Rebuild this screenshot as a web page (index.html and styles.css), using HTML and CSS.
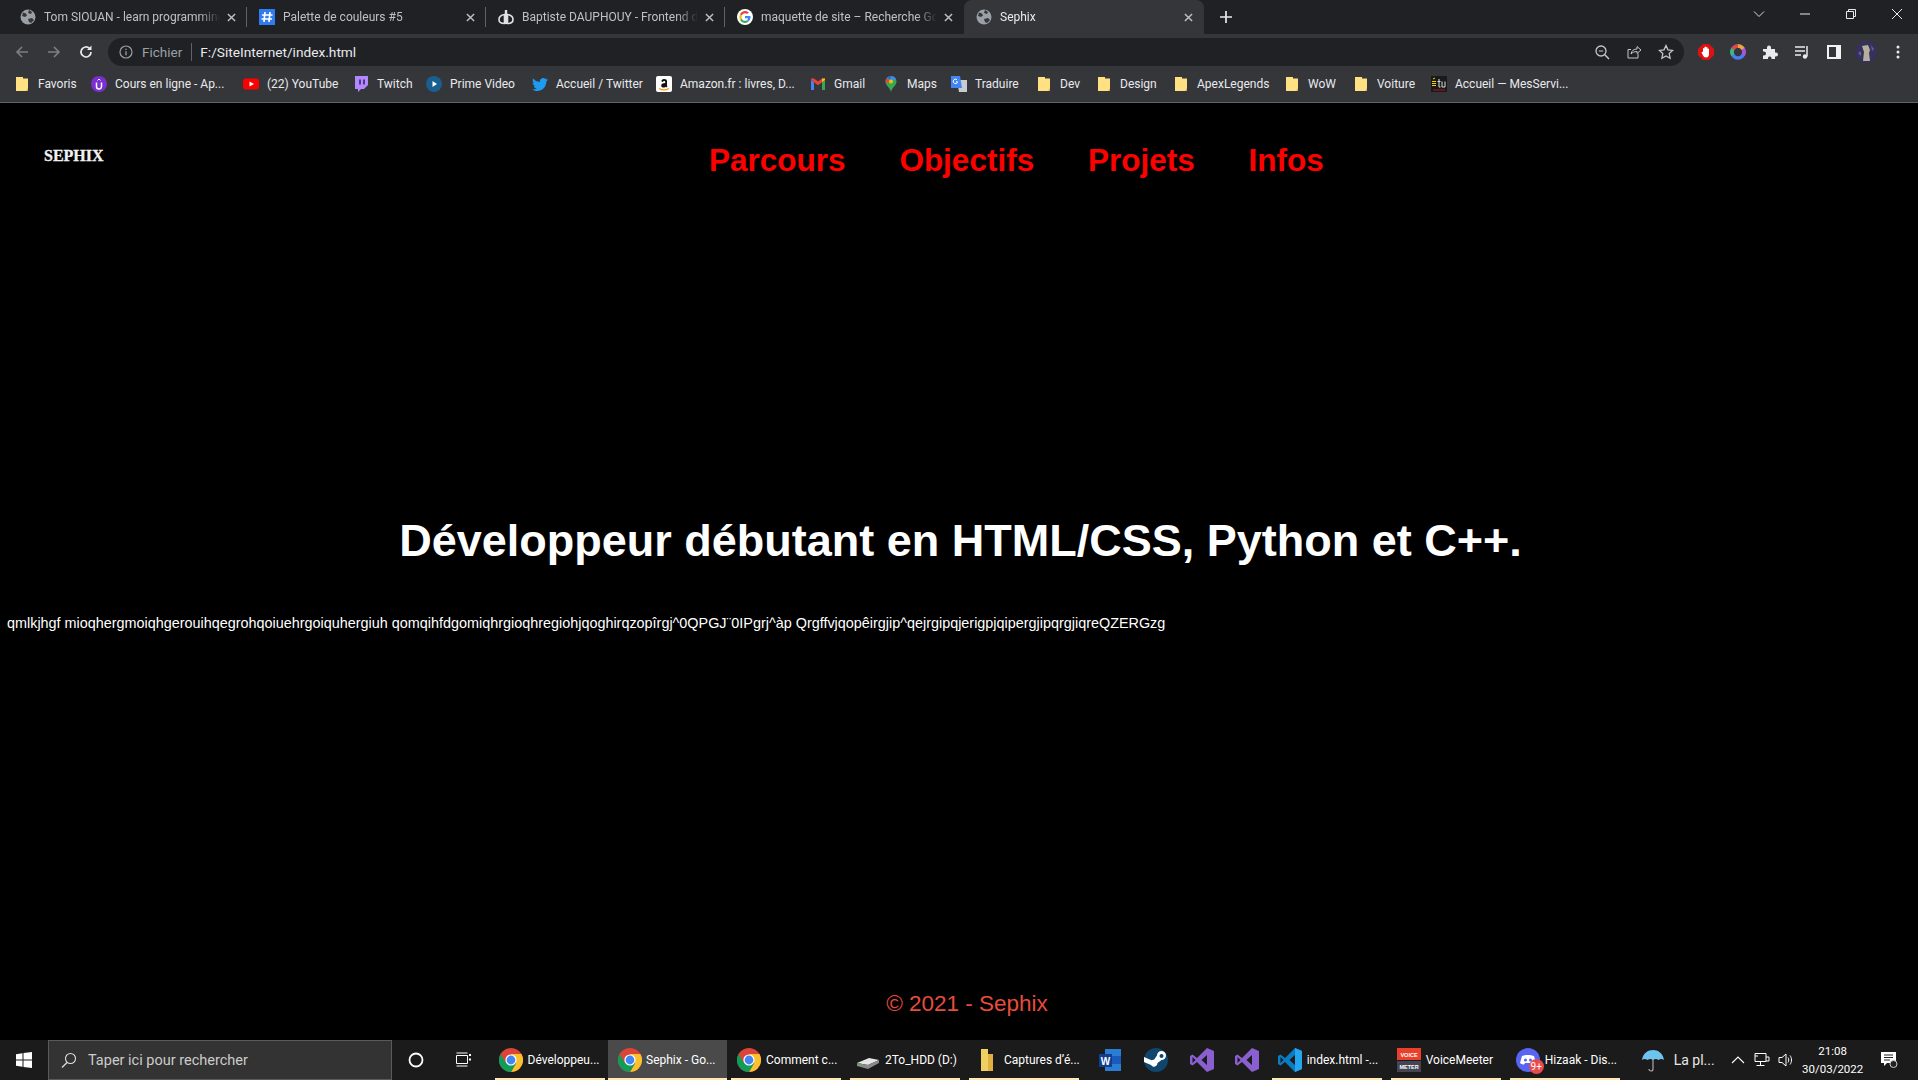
FILE: index.html
```html
<!DOCTYPE html>
<html lang="fr">
<head>
<meta charset="utf-8">
<title>Sephix</title>
<link rel="stylesheet" href="styles.css">
</head>
<body>
<svg class="defs" width="0" height="0" aria-hidden="true">
  <symbol id="globe" viewBox="0 0 16 16"><circle cx="8" cy="8" r="7.5" fill="#9aa0a6"/><path d="M3 3.500l3 1 1 2-2 1.500-3-1zM9 1l3 2-1 2-3-1zM8 10l4-1 2 2-3 3-2-1z" fill="#35363a"/></symbol>
  <symbol id="x" viewBox="0 0 10 10"><path d="M1 1l8 8M9 1l-8 8" stroke="#bdc1c6" stroke-width="1.600" fill="none"/></symbol>
  <symbol id="folder" viewBox="0 0 16 16"><path d="M2 1h7v1.500h5V15H2z" fill="#ffe082"/><path d="M12 15l2-3v3z" fill="#d9b44a"/></symbol>
  <symbol id="google" viewBox="0 0 16 16"><circle cx="8" cy="8" r="8" fill="#fff"/><path d="M13.500 8.200c0-.4 0-.8-.1-1.200H8v2.200h3.100c-.1.700-.5 1.300-1.100 1.700l1.700 1.400c1.100-1 1.800-2.400 1.800-4.100z" fill="#4285f4"/><path d="M8 14c1.500 0 2.800-.5 3.700-1.400L10 11.200c-.5.300-1.200.6-2 .6-1.500 0-2.800-1-3.300-2.400L3 10.800C3.900 12.700 5.800 14 8 14z" fill="#34a853"/><path d="M4.700 9.400C4.500 8.500 4.500 7.500 4.700 6.600L3 5.200c-.8 1.700-.8 3.900 0 5.600z" fill="#fbbc05"/><path d="M8 4.200c.9 0 1.600.3 2.200.9l1.600-1.600C10.800 2.600 9.500 2 8 2 5.800 2 3.900 3.300 3 5.200l1.700 1.400C5.200 5.200 6.500 4.200 8 4.200z" fill="#ea4335"/></symbol>
  <symbol id="chrome" viewBox="0 0 24 24"><circle cx="12" cy="12" r="12" fill="#db4437"/><path d="M12 24a12 12 0 0 0 10.400-18H12l5.200 9z" fill="#fbc02d"/><path d="M12 24l5.200-9L6.800 15 1.600 6A12 12 0 0 0 12 24z" fill="#0f9d58"/><circle cx="12" cy="12" r="5.600" fill="#fff"/><circle cx="12" cy="12" r="4.400" fill="#4285f4"/></symbol>
  <symbol id="vs" viewBox="0 0 24 24"><path d="M17 0l7 3v18l-7 3-10-10-4.500 3.500L0 16V8l2.500-1.500L7 10zM17 7l-5.500 5 5.500 5zM2.500 9v6l3-3z" fill="#8a5fcf"/></symbol>
</svg>

<div class="screen">
  <div class="tabstrip">
    <div class="tab">
      <svg class="fav"><use href="#globe"/></svg>
      <span class="tab-title">Tom SIOUAN - learn programming</span>
      <svg class="close"><use href="#x"/></svg>
    </div>
    <div class="tab">
      <svg class="fav" viewBox="0 0 16 16"><rect width="16" height="16" fill="#2f7bf0"/><path d="M6 3L5 13M11 3l-1 10M3 6h10.500M2.500 10h10.500" stroke="#fff" stroke-width="1.700"/></svg>
      <span class="tab-title">Palette de couleurs #5</span>
      <svg class="close"><use href="#x"/></svg>
    </div>
    <div class="tab">
      <svg class="fav" viewBox="0 0 16 16"><path d="M6.500 14.500V5.500C3 6 1 8 1 10.500s1.500 4 5.500 4zM9.500 14.500V5.500c3.500.5 5.500 2.500 5.500 5s-1.500 4-5.500 4z" fill="none" stroke="#dfe1e5" stroke-width="1.600"/><path d="M8 1v14" stroke="#dfe1e5" stroke-width="2.400"/></svg>
      <span class="tab-title">Baptiste DAUPHOUY - Frontend developer</span>
      <svg class="close"><use href="#x"/></svg>
    </div>
    <div class="tab tab-last">
      <svg class="fav"><use href="#google"/></svg>
      <span class="tab-title">maquette de site – Recherche Google</span>
      <svg class="close"><use href="#x"/></svg>
    </div>
    <div class="tab tab-active">
      <svg class="fav"><use href="#globe"/></svg>
      <span class="tab-title">Sephix</span>
      <svg class="close"><use href="#x"/></svg>
    </div>
    <svg class="newtab" viewBox="0 0 14 14"><path d="M7 1v12M1 7h12" stroke="#e8eaed" stroke-width="1.700"/></svg>
    <div class="winctl">
      <svg class="win-ico" viewBox="0 0 12 12"><path d="M1 3.500l5 5 5-5" stroke="#dadce0" fill="none"/></svg>
      <svg class="win-ico" viewBox="0 0 12 12"><path d="M1 6h10" stroke="#e8eaed" fill="none"/></svg>
      <svg class="win-ico" viewBox="0 0 12 12"><path d="M1.500 3.500h7v7h-7zM3.500 3.500v-2h7v7h-2" stroke="#e8eaed" fill="none"/></svg>
      <svg class="win-ico" viewBox="0 0 12 12"><path d="M1 1l10 10M11 1L1 11" stroke="#e8eaed" fill="none"/></svg>
    </div>
  </div>

  <div class="toolbar">
    <svg class="nav-ico" viewBox="0 0 16 16"><path d="M14 8H3M8 3L3 8l5 5" stroke="#7c7f84" stroke-width="1.600" fill="none"/></svg>
    <svg class="nav-ico" viewBox="0 0 16 16"><path d="M2 8h11M8 3l5 5-5 5" stroke="#7c7f84" stroke-width="1.600" fill="none"/></svg>
    <svg class="nav-ico" viewBox="0 0 16 16"><path d="M13 8a5 5 0 1 1-1.500-3.600" stroke="#e8eaed" stroke-width="1.700" fill="none"/><path d="M13.500 1.500v4.500H9z" fill="#e8eaed"/></svg>
    <div class="omnibox">
      <svg class="info" viewBox="0 0 14 14"><circle cx="7" cy="7" r="6" stroke="#9aa0a6" stroke-width="1.200" fill="none"/><path d="M7 6.200v4M7 3.800v1.300" stroke="#9aa0a6" stroke-width="1.300"/></svg>
      <span class="scheme">Fichier</span>
      <span class="omni-sep"></span>
      <span class="url">F:/SiteInternet/index.html</span>
      <svg class="omni-ico" viewBox="0 0 16 16"><circle cx="7" cy="7" r="5" stroke="#c4c7c5" stroke-width="1.300" fill="none"/><path d="M10.800 10.800L15 15" stroke="#c4c7c5" stroke-width="1.500"/><path d="M4.800 7h4.400" stroke="#c4c7c5"/></svg>
      <svg class="omni-ico" viewBox="0 0 16 16"><path d="M12 9.500V14H2V5.500h3" stroke="#c4c7c5" fill="none"/><path d="M5 10c.5-3.500 3-5 6-5V2.500L15 6l-4 3.500V7.500c-2.500 0-4.500.8-6 2.500z" stroke="#c4c7c5" fill="none"/></svg>
      <svg class="omni-ico" viewBox="0 0 16 16"><path d="M8 1.500l2 4.300 4.700.6-3.500 3.200.9 4.700L8 11.900l-4.100 2.400.9-4.700L1.300 6.400 6 5.800z" stroke="#c4c7c5" stroke-width="1.300" fill="none"/></svg>
    </div>
    <div class="exts">
      <svg class="ext" viewBox="0 0 16 16"><path d="M5 0h6l5 5v6l-5 5H5l-5-5V5z" fill="#e01010"/><path d="M5 8V4.500a.8.800 0 0 1 1.500 0V3a.8.800 0 0 1 1.500 0v.5a.8.800 0 0 1 1.500 0V5a.8.800 0 0 1 1.500 0v5c0 2-1 3.500-3 3.500-1.500 0-2.300-.7-3-2L3.500 8.500C4 7.500 4.800 7.800 5 8z" fill="#fff"/></svg>
      <svg class="ext" viewBox="0 0 16 16"><circle cx="8" cy="8" r="6" fill="none" stroke="#4c7cf0" stroke-width="3.600"/><path d="M8 2a6 6 0 0 1 5.200 3" fill="none" stroke="#f2a33a" stroke-width="3.600"/><path d="M2.800 5A6 6 0 0 1 8 2" fill="none" stroke="#e0483e" stroke-width="3.600"/><path d="M2.800 11A6 6 0 0 1 2.800 5" fill="none" stroke="#3cb878" stroke-width="3.600"/><path d="M13.200 5a6 6 0 0 1 0 6" fill="none" stroke="#b04fd8" stroke-width="3.600"/></svg>
      <svg class="ext" viewBox="0 0 16 16"><path d="M1 5h4V3.500a2 2 0 0 1 4 0V5h4v3.500h1a2 2 0 0 1 0 4h-1V15H9.500v-1a1.800 1.800 0 0 0-3.500 0v1H1v-3.500h1a2 2 0 0 0 0-4H1z" fill="#e8eaed"/></svg>
      <svg class="ext" viewBox="0 0 16 16"><path d="M1 3h10M1 7h10M1 11h6" stroke="#e8eaed" stroke-width="1.400"/><path d="M13 2v10.500" stroke="#e8eaed" stroke-width="1.500"/><circle cx="11" cy="12.500" r="2.200" fill="#e8eaed"/></svg>
      <svg class="ext" viewBox="0 0 16 16"><path d="M1 1h14v14H1zM3 3v10h7V3z" fill="#f1f3f4" fill-rule="evenodd"/></svg>
      <svg class="avatar" viewBox="0 0 22 22"><circle cx="11" cy="11" r="11" fill="#34325a"/><path d="M7 5l6-1 2 5-1 3 1 8H8l1-9z" fill="#b8ad9b"/><path d="M16 4l3 4-2 2zM3 12l3-2 0 5z" fill="#6d5a95"/></svg>
      <svg class="ext" viewBox="0 0 16 16"><circle cx="8" cy="3" r="1.500" fill="#e8eaed"/><circle cx="8" cy="8" r="1.500" fill="#e8eaed"/><circle cx="8" cy="13" r="1.500" fill="#e8eaed"/></svg>
    </div>
  </div>

  <div class="bookmarks">
    <div class="bm"><svg class="bm-ico"><use href="#folder"/></svg><span>Favoris</span></div>
    <div class="bm"><svg class="bm-ico" viewBox="0 0 16 16"><circle cx="8" cy="8" r="8" fill="#7c2fd0"/><path d="M5.500 6.500v4a2.500 2.500 0 0 0 5 0v-4" stroke="#fff" stroke-width="1.500" fill="none"/><path d="M6.500 4.500L8 3l1.500 1.500" stroke="#fff" fill="none"/></svg><span>Cours en ligne - Ap...</span></div>
    <div class="bm"><svg class="bm-ico" viewBox="0 0 16 16"><rect y="2.500" width="16" height="11" rx="3" fill="#f00"/><path d="M6.500 5.500v5L11 8z" fill="#fff"/></svg><span>(22) YouTube</span></div>
    <div class="bm"><svg class="bm-ico" viewBox="0 0 16 16"><path d="M2 0h13v9l-4 4H8l-3 3v-3H2z" fill="#b388ff"/><path d="M7 3.500v5M11 3.500v5" stroke="#2a2060" stroke-width="1.500"/></svg><span>Twitch</span></div>
    <div class="bm"><svg class="bm-ico" viewBox="0 0 16 16"><circle cx="8" cy="8" r="8" fill="#1a5f8f"/><path d="M6.500 5v6l4.500-3z" fill="#fff"/></svg><span>Prime Video</span></div>
    <div class="bm"><svg class="bm-ico" viewBox="0 0 16 16"><path d="M16 3.500c-.6.300-1.200.4-1.900.5.700-.4 1.200-1 1.400-1.800-.6.400-1.300.7-2.100.8a3.300 3.300 0 0 0-5.600 3C5 5.900 2.600 4.600 1.100 2.600c-.9 1.500-.4 3.400 1 4.400-.5 0-1-.2-1.500-.4 0 1.600 1.100 3 2.600 3.300-.5.100-1 .1-1.500 0 .4 1.300 1.600 2.300 3.100 2.300A6.600 6.600 0 0 1 0 13.500c1.500.9 3.200 1.500 5 1.500 6 0 9.500-5 9.400-9.800.6-.5 1.200-1 1.600-1.700z" fill="#1d9bf0"/></svg><span>Accueil / Twitter</span></div>
    <div class="bm"><svg class="bm-ico" viewBox="0 0 16 16"><rect width="16" height="16" rx="2" fill="#fff"/><path d="M8 3c2 0 3 .8 3 2.300V9c0 .6.200 1 .5 1.300L10.200 11.500c-.3-.2-.6-.6-.7-.8-.5.600-1.200.9-2 .9-1.400 0-2.300-.8-2.300-2.200 0-1.600 1.400-2.400 4-2.500v-.8c0-.6-.4-1-1-1-.7 0-1.100.3-1.300 1L5.300 5.300C5.600 3.800 6.700 3 8 3z" fill="#111"/><path d="M3 12.500c3 1.700 7 1.700 10 0" stroke="#f90" stroke-width="1.200" fill="none"/></svg><span>Amazon.fr : livres, D...</span></div>
    <div class="bm"><svg class="bm-ico" viewBox="0 0 16 16"><path d="M1 14V4l3 2.300V14z" fill="#4285f4"/><path d="M12 14V6.300L15 4v10z" fill="#34a853"/><path d="M1 4l7 5.300L15 4v-1.500L12 2.500 8 5.500 4 2.500 1 2.500z" fill="#ea4335"/><path d="M12 2.500h3V4l-3 2.300z" fill="#fbbc05"/></svg><span>Gmail</span></div>
    <div class="bm"><svg class="bm-ico" viewBox="0 0 16 16"><path d="M8 0a5.500 5.500 0 0 1 5.500 5.500C13.500 9.500 9 11.500 8 16 7 11.500 2.500 9.500 2.500 5.500A5.500 5.500 0 0 1 8 0z" fill="#34a853"/><path d="M4 2a5.500 5.500 0 0 1 4-2v4z" fill="#1a73e8"/><path d="M8 0a5.500 5.500 0 0 1 5 3.500L8 5z" fill="#4285f4"/><path d="M2.500 5.500c0-1.500.5-2.700 1.500-3.500l3 3-4 2.500z" fill="#ea4335"/><circle cx="8" cy="5.500" r="2" fill="#fbbc05"/></svg><span>Maps</span></div>
    <div class="bm"><svg class="bm-ico" viewBox="0 0 16 16"><path d="M6 4h10v12H8z" fill="#c8cbd0"/><path d="M0 0h9l2 12H0z" fill="#4285f4"/><path d="M6 3.800a2.200 2.200 0 1 0 .6 2H5" stroke="#fff" fill="none"/></svg><span>Traduire</span></div>
    <div class="bm"><svg class="bm-ico"><use href="#folder"/></svg><span>Dev</span></div>
    <div class="bm"><svg class="bm-ico"><use href="#folder"/></svg><span>Design</span></div>
    <div class="bm"><svg class="bm-ico"><use href="#folder"/></svg><span>ApexLegends</span></div>
    <div class="bm"><svg class="bm-ico"><use href="#folder"/></svg><span>WoW</span></div>
    <div class="bm"><svg class="bm-ico"><use href="#folder"/></svg><span>Voiture</span></div>
    <div class="bm"><svg class="bm-ico" viewBox="0 0 16 16"><rect width="16" height="16" fill="#1a1a1a"/><rect x="2" y="13.500" width="12" height="1" fill="#b01515"/><path d="M1 5.500h4M1 7.500h4M1 9.500h4M2 3l2-1" stroke="#f0d400"/><path d="M8 3v8h1.500M6.500 5.500h3M11 5.500v5.500h3V5.500" stroke="#ddd" fill="none"/></svg><span>Accueil — MesServi...</span></div>
  </div>

  <main class="page">
    <header class="site-header">
      <div class="logo">SEPHIX</div>
      <nav class="site-nav">
        <a class="site-link">Parcours</a>
        <a class="site-link">Objectifs</a>
        <a class="site-link">Projets</a>
        <a class="site-link">Infos</a>
      </nav>
    </header>
    <h1 class="headline">Développeur débutant en HTML/CSS, Python et C++.</h1>
    <p class="lorem">qmlkjhgf mioqhergmoiqhgerouihqegrohqoiuehrgoiquhergiuh qomqihfdgomiqhrgioqhregiohjqoghirqzopîrgj^0QPGJ¨0IPgrj^àp Qrgffvjqopêirgjip^qejrgipqjerigpjqipergjipqrgjiqreQZERGzg</p>
    <footer class="site-footer">© 2021 - Sephix</footer>
  </main>

  <div class="taskbar">
    <svg class="start" viewBox="0 0 16 16"><path d="M0 2.300l6.500-1v6.200H0zM7.500 1.100L16 0v7.500H7.500zM0 8.500h6.500v6.200l-6.500-1zM7.500 8.500H16V16l-8.500-1.100z" fill="#fff"/></svg>
    <div class="searchbox">
      <svg class="search-ico" viewBox="0 0 16 16"><circle cx="9.500" cy="6.500" r="5" stroke="#e0e0e0" stroke-width="1.100" fill="none"/><path d="M6 10.500L1 15.500" stroke="#e0e0e0" stroke-width="1.200"/></svg>
      <span>Taper ici pour rechercher</span>
    </div>
    <svg class="cortana" viewBox="0 0 16 16"><circle cx="8" cy="8" r="6.500" stroke="#fff" stroke-width="1.800" fill="none"/></svg>
    <svg class="taskview" viewBox="0 0 16 16"><path d="M.5 3.500h11v8H.5zM.5 1h11M.5 14h11" stroke="#fff" fill="none"/><path d="M14 2v2M14 6.500v2" stroke="#fff" stroke-width="2"/></svg>
    <div class="task open t-dev"><svg class="task-ico"><use href="#chrome"/></svg><span>Développeu...</span></div>
    <div class="task open active"><svg class="task-ico"><use href="#chrome"/></svg><span>Sephix - Go...</span></div>
    <div class="task open"><svg class="task-ico"><use href="#chrome"/></svg><span>Comment c...</span></div>
    <div class="task open"><svg class="task-ico" viewBox="0 0 24 24"><path d="M1 15l12-5 10 2-11 5z" fill="#e6e6e6"/><path d="M1 15l11 2 11-5v3L12 21 1 18z" fill="#8a8a8a"/><circle cx="5" cy="17" r="1" fill="#3c3"/></svg><span>2To_HDD (D:)</span></div>
    <div class="task open"><svg class="task-ico" viewBox="0 0 24 24"><path d="M6 1h7v22H6z" fill="#f0d060"/><path d="M13 6h5v17h-5z" fill="#e0b040"/></svg><span>Captures d’é...</span></div>
    <svg class="pin p-word" viewBox="0 0 24 24"><path d="M7 1h16v22H7z" fill="#2b7cd3"/><path d="M7 8h16v8H7z" fill="#185abd"/><rect x="1" y="6" width="13" height="13" fill="#103f91"/><text x="7.500" y="16.500" class="word-w">W</text></svg>
    <svg class="pin p-steam" viewBox="0 0 24 24"><circle cx="12" cy="12" r="12" fill="#10466e"/><path d="M0 14l7 3a3.500 3.500 0 0 0 6.500-2l4-3a4.500 4.500 0 1 0-4.500-4.500l-3 4.200a3.500 3.500 0 0 0-2.500.6L0 9z" fill="#fff"/><circle cx="17.500" cy="8" r="2" fill="#10466e"/></svg>
    <svg class="pin"><use href="#vs"/></svg>
    <svg class="pin"><use href="#vs"/></svg>
    <div class="task open t-code"><svg class="task-ico" viewBox="0 0 24 24"><path d="M17 0l7 3v18l-7 3L7 14l-4.500 3.500L0 16V8l2.500-1.500L7 10z" fill="#0a7cc4"/><path d="M17 0l7 3v18l-7 3z" fill="#23a6ed"/><path d="M17 7l-5.500 5 5.500 5zM2.500 9v6l3-3z" fill="#1b1b1b"/></svg><span>index.html -...</span></div>
    <div class="task open"><svg class="task-ico" viewBox="0 0 24 24"><rect width="24" height="12" fill="#e8402a"/><rect y="13" width="24" height="11" fill="#445"/><text x="12" y="8.500" class="vm-text">VOICE</text><text x="12" y="21" class="vm-text">METER</text></svg><span>VoiceMeeter</span></div>
    <div class="task open"><span class="task-badgebox"><svg class="task-ico" viewBox="0 0 24 24"><circle cx="12" cy="12" r="12" fill="#5865f2"/><path d="M6 8c3-1.500 9-1.500 12 0l2 7c-1.500 1-3 1.500-4 1.500l-1-1.500h-6l-1 1.500c-1 0-2.500-.5-4-1.500z" fill="#fff"/><circle cx="9.500" cy="12" r="1.500" fill="#5865f2"/><circle cx="14.500" cy="12" r="1.500" fill="#5865f2"/></svg><span class="badge">9+</span></span><span>Hizaak - Dis...</span></div>
    <div class="weather">
      <svg class="task-ico" viewBox="0 0 24 24"><path d="M1 12C2 5 7 2 12 2s10 3 11 10c-2-1.500-3.500-1.500-5.500 0-2-1.500-3.500-1.500-5.500 0-2-1.500-3.500-1.500-5.500 0-2-1.500-3.500-1.500-5.500 0z" fill="#6fc3ef"/><path d="M12 11v10a2 2 0 0 1-4 0" stroke="#aaa" stroke-width="1.200" fill="none"/></svg>
      <span>La pl...</span>
    </div>
    <div class="tray">
      <svg class="tray-ico" viewBox="0 0 16 16"><path d="M2 11l6-6 6 6" stroke="#fff" stroke-width="1.100" fill="none"/></svg>
      <svg class="tray-ico" viewBox="0 0 16 16"><path d="M1 1.500h11v8H1zM6.500 9.500v4M2.500 13.500h8M4 4H1" stroke="#fff" fill="none"/><path d="M12 5h3v4h-3" stroke="#fff" fill="none"/></svg>
      <svg class="tray-ico" viewBox="0 0 16 16"><path d="M1 5.500h3L8 2v12L4 10.500H1z" stroke="#fff" fill="none"/><path d="M10 5.500c1 1.500 1 3.500 0 5M12 3.500c2 2.500 2 6.500 0 9" stroke="#fff" fill="none"/></svg>
    </div>
    <div class="clock"><span>21:08</span><span>30/03/2022</span></div>
    <svg class="notif" viewBox="0 0 18 18"><path d="M1 1h15v11H7l-3 3v-3H1z" fill="#fff"/><path d="M4 4h9M4 6.500h9M4 9h6" stroke="#222"/><circle cx="13.500" cy="13" r="3.500" fill="#222" stroke="#ccc"/></svg>
  </div>
</div>
</body>
</html>
```

FILE: styles.css
```css
* { box-sizing: border-box; }
html, body { margin: 0; height: 100%; overflow: hidden; background: #000; }
.defs { position: absolute; }
.screen { display: flex; flex-direction: column; width: 1918px; height: 1080px; font-family: Roboto, "Liberation Sans", sans-serif; }

/* tab strip */
.tabstrip { display: flex; align-items: stretch; height: 34px; background: #202124; flex: none; }
.tab { position: relative; display: flex; align-items: center; width: 239px; padding: 0 11.500px 0 20px; color: #bdc1c6; font-size: 12px; }
.tab:first-child { width: 247px; }
.tab:not(.tab-last):not(.tab-active)::after { content: ""; position: absolute; right: 0; top: 7px; bottom: 7px; width: 1px; background: #5f6368; }
.tab-active { width: 240px; background: #35363a; color: #e8eaed; border-radius: 8px 8px 0 0; padding-left: 12px; }
.tab:nth-child(2), .tab:nth-child(3), .tab:nth-child(4) { padding-left: 12px; }
.fav { width: 16px; height: 16px; flex: none; margin-right: 8px; }
.tab-title { flex: 1; min-width: 0; overflow: hidden; white-space: nowrap; -webkit-mask-image: linear-gradient(90deg, #000 88%, transparent); mask-image: linear-gradient(90deg, #000 88%, transparent); }
.close { width: 9px; height: 9px; flex: none; margin-left: 7px; }
.newtab { width: 14px; height: 14px; align-self: center; margin-left: 15px; flex: none; }
.winctl { display: flex; margin-left: auto; gap: 34px; padding: 8px 15px 0 0; align-items: flex-start; }
.win-ico { width: 12px; height: 12px; flex: none; }

/* toolbar */
.toolbar { display: flex; align-items: center; height: 32px; padding: 4px 0 0 14px; background: #35363a; flex: none; }
.nav-ico { width: 16px; height: 16px; flex: none; margin-right: 16px; }
.omnibox { display: flex; align-items: center; width: 1576px; height: 28px; margin-left: -2px; padding: 0 10px 0 11px; border-radius: 14px; background: #202124; font-size: 14px; }
.info { width: 14px; height: 14px; flex: none; margin-right: 9px; }
.scheme { color: #9aa0a6; font-size: 13.500px; }
.omni-sep { width: 1px; height: 18px; margin: 0 8px 0 9px; background: #5f6368; }
.url { flex: 1; color: #e8eaed; font-size: 13.700px; }
.omni-ico { width: 16px; height: 16px; margin-left: 16px; flex: none; }
.exts { display: flex; align-items: center; gap: 16px; margin-left: 14px; }
.ext { width: 16px; height: 16px; flex: none; }
.avatar { width: 22px; height: 22px; flex: none; margin: 0 -3px; }

/* bookmarks */
.bookmarks { display: grid; grid-template-columns: 77px 152px 110px 73px 106px 124px 154px 73px 68px 85px 60px 77px 111px 69px 78px auto; align-items: center; height: 37px; padding: 0 0 1px 14px; background: #35363a; border-bottom: 1px solid #5f6368; color: #e8eaed; font-size: 12px; flex: none; }
.bm { display: flex; align-items: center; gap: 8px; white-space: nowrap; }
.bm-ico { width: 16px; height: 16px; flex: none; }

/* page */
.page { display: flex; flex-direction: column; flex: 1; min-height: 0; background: #000; font-family: "Liberation Sans", Arial, sans-serif; color: #fff; }
.site-header { display: flex; align-items: center; height: 114px; padding-left: 44px; }
.logo { font-family: "Liberation Serif", serif; font-weight: 700; font-size: 16px; color: #f2f2f2; width: 665px; margin-top: -9px; -webkit-text-stroke: 0.3px #f2f2f2; }
.site-nav { display: flex; gap: 53.800px; }
.site-link { color: #f00; font-weight: 700; font-size: 31.500px; }
.headline { margin: 298px 0 0; padding-left: 3px; font-size: 45px; line-height: 52px; font-weight: 700; text-align: center; }
.lorem { margin: 47px 0 0 7px; font-size: 14.400px; line-height: 18px; }
.site-footer { margin: auto 0 22px 16px; color: #e74c3c; font-size: 22.500px; line-height: 28px; text-align: center; }

/* taskbar */
.taskbar { display: flex; align-items: center; height: 40px; background: #1b1b1b; color: #fff; font-family: Roboto, sans-serif; font-size: 12px; flex: none; }
.start { width: 16px; height: 16px; margin: 0 16px; flex: none; }
.searchbox { display: flex; align-items: center; gap: 11px; width: 344px; height: 40px; padding-left: 12px; background: #333; border: 1px solid #5a5a5a; color: #ccc; font-size: 14.500px; flex: none; }
.search-ico { width: 16px; height: 16px; flex: none; }
.cortana { width: 16px; height: 16px; margin-left: 16px; flex: none; }
.taskview { width: 16px; height: 16px; margin: 0 23px 0 32px; flex: none; }
.task { position: relative; display: flex; align-items: center; gap: 5px; width: 110px; height: 40px; padding-left: 6px; margin-right: 9px; white-space: nowrap; flex: none; }
.task.open::after { content: ""; position: absolute; left: 0; right: 0; bottom: 0; height: 2px; background: #ffe9b0; }
.task.active { background: #4a4a4a; width: 119px; padding-left: 10px; gap: 4px; margin: 0 4px 0 -3px; }
.t-dev { margin-right: 6px; padding-left: 3.500px; }
.task-ico { width: 24px; height: 24px; flex: none; }
.pin { width: 24px; height: 24px; flex: none; margin-right: 21px; }
.p-word { margin-left: 9.700px; margin-right: 22px; }
.p-steam { margin-right: 22px; }
.word-w { fill: #fff; font: 700 10px "Liberation Sans", sans-serif; text-anchor: middle; }
.vm-text { fill: #fff; font: 700 5.500px "Liberation Sans", sans-serif; text-anchor: middle; }
.t-code { margin-left: -8px; }
.task-badgebox { position: relative; display: flex; flex: none; }
.badge { position: absolute; right: -4px; bottom: -2px; width: 15px; height: 15px; border-radius: 50%; background: #e84b4b; color: #fff; font-size: 10px; line-height: 15px; text-align: center; }
.weather { display: flex; align-items: center; gap: 9px; margin-left: 12px; color: #e8e8e8; font-size: 14px; flex: none; }
.tray { display: flex; gap: 8px; margin-left: 15px; flex: none; }
.tray-ico { width: 16px; height: 16px; flex: none; }
.clock { display: flex; flex-direction: column; align-items: center; width: 60px; margin-left: 9px; line-height: 18px; font-size: 11.500px; flex: none; }
.notif { width: 18px; height: 18px; margin-left: 17px; flex: none; }
```
